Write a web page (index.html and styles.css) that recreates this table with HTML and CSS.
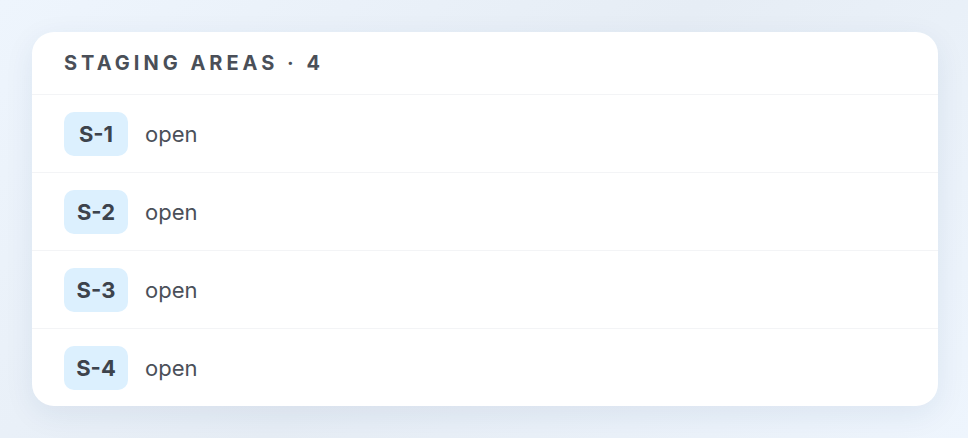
FILE: index.html
```html
<!DOCTYPE html>
<html>
<head>
<meta charset="utf-8">
<link rel="stylesheet" href="styles.css">
</head>
<body>
<div class="page">
  <section class="card">
    <header class="card-head">STAGING AREAS · 4</header>
    <ul class="list">
      <li class="row"><span class="badge">S-1</span><span class="status">open</span></li>
      <li class="row"><span class="badge">S-2</span><span class="status">open</span></li>
      <li class="row"><span class="badge">S-3</span><span class="status">open</span></li>
      <li class="row"><span class="badge">S-4</span><span class="status">open</span></li>
    </ul>
  </section>
</div>
</body>
</html>
```
FILE: styles.css
```css
html, body {
  margin: 0;
  padding: 0;
}
body {
  width: 968px;
  height: 438px;
  overflow: hidden;
  font-family: Inter, "Noto Sans", sans-serif;
  background: linear-gradient(135deg, #eef5fd 0%, #e6edf5 50%, #eef5fd 100%);
}
.page {
  padding: 32px 30px 32px 32px;
}
.card {
  background: #ffffff;
  border-radius: 22px;
  box-shadow: 0 8px 30px rgba(30, 60, 110, 0.08);
  overflow: hidden;
}
.card-head {
  height: 63px;
  box-sizing: border-box;
  padding: 0 32px;
  display: flex;
  align-items: center;
  font-size: 20px;
  font-weight: 700;
  letter-spacing: 0.2em;
  color: #4a4f58;
  border-bottom: 1px solid #f3f4f6;
}
.list {
  list-style: none;
  margin: 0;
  padding: 0;
}
.row {
  display: flex;
  align-items: center;
  gap: 17px;
  height: 78px;
  box-sizing: border-box;
  padding: 0 32px;
  border-bottom: 1px solid #f3f4f6;
}
.row:last-child {
  border-bottom: none;
  height: 77px;
}
.badge {
  width: 64px;
  height: 44px;
  border-radius: 10px;
  background: #dcf0fe;
  display: flex;
  align-items: center;
  justify-content: center;
  font-size: 22px;
  font-weight: 700;
  color: #3d434c;
}
.status {
  font-size: 22px;
  color: #4b5059;
}
```
